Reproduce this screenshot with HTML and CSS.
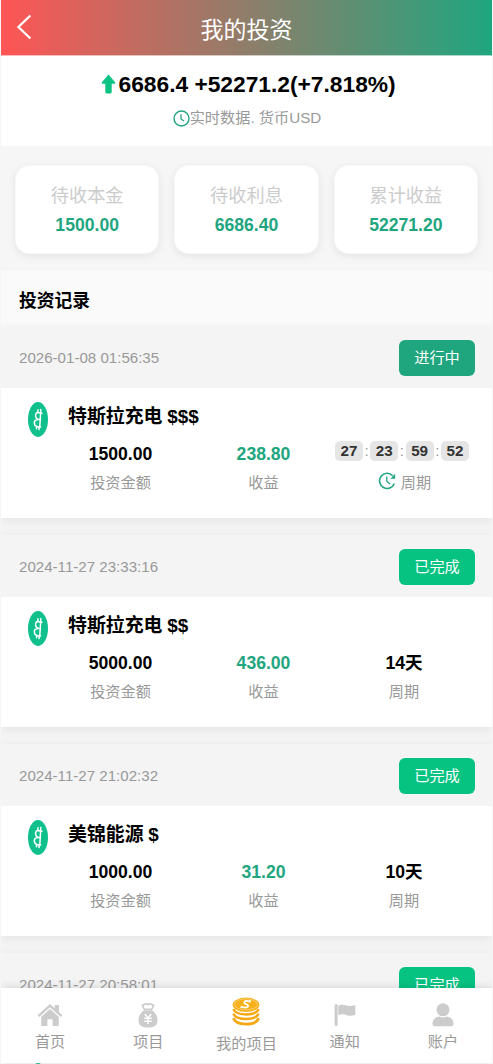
FILE: index.html
```html
<!DOCTYPE html>
<html lang="zh-CN">
<head>
<meta charset="utf-8">
<meta name="viewport" content="width=device-width, initial-scale=1">
<title>我的投资</title>
<link rel="stylesheet" href="styles.css">
</head>
<body>
<svg class="defs" width="0" height="0" aria-hidden="true">
  <symbol id="coin" viewBox="0 0 20 35">
    <ellipse cx="10" cy="17.5" rx="10" ry="17.5" fill="#0fc08d"/>
    <g fill="none" stroke="#fff" stroke-width="1.5" stroke-linecap="round" stroke-linejoin="round">
      <path d="M14 11.2 9.6 10.4Q7.4 11 7.6 14 7.8 17 10.6 17.4L12.4 17.6M10.6 17.4Q6.5 17.2 6.3 20.6 6.3 24 9.2 24.6L12.6 25M12.6 11 11.8 24.8M10 7.8 9.8 10.2M12.8 7.6 12.6 10.5M8.6 24.8 8.5 26.8M11.2 25 11 27.6"/>
    </g>
  </symbol>
</svg>
<div class="page">
  <header class="header">
    <svg class="back" width="16" height="26" viewBox="0 0 16 26"><path d="M14.4 1.5 2.4 13 14.4 24.5" fill="none" stroke="#fff" stroke-width="2.2"/></svg>
    <h1 class="title">我的投资</h1>
  </header>

  <section class="summary">
    <div class="total">
      <svg class="up" width="15" height="20" viewBox="0 0 15 20"><path d="M7.5.4 14.3 8.4Q14.6 9.7 13.4 9.8H10.7V18Q10.7 19.4 9.4 19.4H5.6Q4.3 19.4 4.3 18V9.8H1.6Q.4 9.7.7 8.4Z" fill="#0bc382"/></svg><span>6686.4 +52271.2(+7.818%)</span>
    </div>
    <div class="live">
      <svg width="17" height="17" viewBox="0 0 17 17" fill="none" stroke="#23a580"><circle cx="8.5" cy="8.5" r="7.5" stroke-width="1.4"/><path d="M8 4.3V9L11 11" stroke-width="1.3"/></svg><span>实时数据. 货币USD</span>
    </div>
  </section>

  <section class="stats">
    <div class="stat"><span class="stat-label">待收本金</span><b class="stat-value">1500.00</b></div>
    <div class="stat"><span class="stat-label">待收利息</span><b class="stat-value">6686.40</b></div>
    <div class="stat"><span class="stat-label">累计收益</span><b class="stat-value">52271.20</b></div>
  </section>

  <h2 class="section-title">投资记录</h2>

  <main class="records">
    <article class="record">
      <div class="record-head"><time>2026-01-08 01:56:35</time><span class="status running">进行中</span></div>
      <div class="record-body">
        <svg class="coin" width="20" height="35"><use href="#coin"/></svg>
        <h3 class="name">特斯拉充电 <span class="grade">$$$</span></h3>
        <div class="figures">
          <div class="figure"><b>1500.00</b><span>投资金额</span></div>
          <div class="figure profit"><b>238.80</b><span>收益</span></div>
          <div class="figure">
            <div class="countdown"><b>27</b><i>:</i><b>23</b><i>:</i><b>59</b><i>:</i><b>52</b></div>
            <span class="cycle"><svg width="18" height="18" viewBox="0 0 18 18" fill="none" stroke="#23a580" stroke-width="1.6"><path d="M14.7 3.7A7.6 7.6 0 1 0 16.3 11.5"/><path d="M8.8 4.5V9.2L12 12" stroke-width="1.3"/><path d="M17.2 1.8V6.8H12.4Z" fill="#23a580" stroke="none"/></svg>周期</span>
          </div>
        </div>
      </div>
    </article>

    <article class="record">
      <div class="record-head"><time>2024-11-27 23:33:16</time><span class="status">已完成</span></div>
      <div class="record-body">
        <svg class="coin" width="20" height="35"><use href="#coin"/></svg>
        <h3 class="name">特斯拉充电 <span class="grade">$$</span></h3>
        <div class="figures">
          <div class="figure"><b>5000.00</b><span>投资金额</span></div>
          <div class="figure profit"><b>436.00</b><span>收益</span></div>
          <div class="figure"><b>14天</b><span>周期</span></div>
        </div>
      </div>
    </article>

    <article class="record">
      <div class="record-head"><time>2024-11-27 21:02:32</time><span class="status">已完成</span></div>
      <div class="record-body">
        <svg class="coin" width="20" height="35"><use href="#coin"/></svg>
        <h3 class="name">美锦能源 <span class="grade">$</span></h3>
        <div class="figures">
          <div class="figure"><b>1000.00</b><span>投资金额</span></div>
          <div class="figure profit"><b>31.20</b><span>收益</span></div>
          <div class="figure"><b>10天</b><span>周期</span></div>
        </div>
      </div>
    </article>

    <article class="record">
      <div class="record-head"><time>2024-11-27 20:58:01</time><span class="status">已完成</span></div>
      <div class="record-body">
        <svg class="coin" width="20" height="35"><use href="#coin"/></svg>
      </div>
    </article>
  </main>

  <nav class="tabbar">
    <a class="tab">
      <svg width="26" height="24" viewBox="0 0 26 24" fill="#ccc"><path d="M13 1 17.8 5.3V2H22V9.2L25.4 12.2 23.8 13.9 13 4.2 2.2 13.9.6 12.2Z"/><path d="M13 6 21.8 13.8V22Q21.8 23 20.8 23H15.6V16.3H10.4V23H5.2Q4.2 23 4.2 22V13.8Z"/></svg>
      <span>首页</span>
    </a>
    <a class="tab">
      <svg width="20" height="25" viewBox="0 0 20 25"><path d="M6.2 6.2 4.2 2.5Q8-.3 10 1.6 12-.3 15.8 2.5L13.8 6.2Z" fill="none" stroke="#ccc" stroke-width="1.6" stroke-linejoin="round"/><path d="M5.8 7.3H14.2C17 9.6 19.5 13 19.5 17 19.5 22.5 16.5 24.5 10 24.5S.5 22.5.5 17C.5 13 3 9.6 5.8 7.3Z" fill="#ccc"/><path d="M6.8 11 10 15 13.2 11M10 15V21M6.2 15.3H13.8M6.2 18.3H13.8" stroke="#fff" stroke-width="1.4" fill="none"/></svg>
      <span>项目</span>
    </a>
    <a class="tab active">
      <svg width="28" height="29" viewBox="0 0 28 29"><g fill="none" stroke="#f5a812" stroke-width="2.5"><path d="M1.5 12Q3 17.2 14 17.4 25 17.2 26.5 12"/><path d="M1.5 16.6Q3 21.8 14 22 25 21.8 26.5 16.6"/><path d="M1.5 21.2Q3 26.9 14 27.1 25 26.9 26.5 21.2" stroke-width="2.8"/></g><ellipse cx="14" cy="7.8" rx="13.4" ry="7.3" fill="#f8b01b"/><ellipse cx="14" cy="7.4" rx="11.4" ry="5.6" fill="none" stroke="#fff" stroke-width=".5" opacity=".7"/><path d="M18.4 5.1Q14 2.9 12.4 5 11.6 6.4 14.3 7.2 17.5 8.5 15.5 10 13 11.3 9.3 9.6M18.6 3.2 17.3 5.2M10.3 9 8.8 11" fill="none" stroke="#fff" stroke-width="1.7"/></svg>
      <span>我的项目</span>
    </a>
    <a class="tab">
      <svg width="22" height="24" viewBox="0 0 22 24" fill="#ccc"><rect x=".6" y="1" width="3" height="22" rx="1.5"/><path d="M4.3 2.5Q8.5.8 12.5 2.5 16.8 3.6 21.3 2V11.8Q16.8 13.8 12.5 12 8.5 10.3 4.3 12.2Z"/></svg>
      <span>通知</span>
    </a>
    <a class="tab">
      <svg width="22" height="24" viewBox="0 0 22 24" fill="#ccc"><circle cx="11" cy="6.8" r="6.5"/><path d="M.5 20.5Q1 14.2 7.2 13.6 11 15.6 14.8 13.6 21 14.2 21.5 20.5 21.6 23.3 19 23.3H3Q.4 23.3.5 20.5Z"/></svg>
      <span>账户</span>
    </a>
  </nav>
</div>
</body>
</html>
```
FILE: styles.css
```css
* { box-sizing: border-box; }

body {
  margin: 0;
  background: #f4f4f4;
  color: #000;
  font-family: "Liberation Sans", "Noto Sans CJK SC", sans-serif;
}

svg { display: block; flex: none; }
h1, h2, h3 { margin: 0; }
.defs { position: absolute; }

.page {
  position: relative;
  height: 1064px;
  overflow: hidden;
  border: solid #f5f5f5;
  border-width: 0 1px;
}

.header {
  display: grid;
  grid-template-columns: 48px 1fr 48px;
  align-items: center;
  height: 56px;
  padding-top: 4px;
  border-bottom: 1px solid rgba(255, 255, 255, .6);
  background: linear-gradient(90deg, #ff5555, #1fa67f);
}
.back { margin: -5px 0 0 15px; }
.title {
  color: #fff;
  font-size: 23px;
  font-weight: 400;
  line-height: 34px;
  text-align: center;
}

.summary {
  height: 90px;
  padding-top: 13px;
  background: #fff;
}
.total, .live {
  display: flex;
  justify-content: center;
  align-items: center;
}
.total {
  gap: 3px;
  padding-left: 3px;
  font-size: 22.8px;
  font-weight: 700;
  line-height: 30px;
}
.total span {
  width: 277px;
  letter-spacing: -.02px;
  white-space: nowrap;
}
.live {
  margin-top: 8px;
  padding-left: 1px;
  color: #999;
  font-size: 15.2px;
  line-height: 22px;
}

.stats {
  display: grid;
  grid-template-columns: repeat(3, 1fr);
  gap: 15px;
  height: 125px;
  padding: 19px 14px 18px;
  background: #f6f6f6;
}
.stat {
  display: flex;
  flex-direction: column;
  align-items: center;
  height: 89px;
  padding-top: 16px;
  border: 1px solid #f8f8f8;
  border-radius: 14px;
  background: #fff;
  box-shadow: 0 2px 9px rgba(0, 0, 0, .08);
}
.stat-label { color: #ccc; font-size: 18.2px; line-height: 28px; }
.stat-value { color: #1fa67f; font-size: 17.6px; line-height: 30px; }

.section-title {
  height: 55px;
  padding-left: 18px;
  background: #fafafa;
  font-size: 17.8px;
  line-height: 60px;
}

.records { display: flex; flex-direction: column; gap: 17px; }
.record { box-shadow: 0 2px 10px rgba(0, 0, 0, .07); }
.record-head {
  display: flex;
  justify-content: space-between;
  align-items: center;
  height: 62px;
  padding: 1px 17px 0 18px;
  background: #f4f4f4;
  color: #999;
  font-size: 15.1px;
}
.status {
  width: 76px;
  height: 36px;
  border-radius: 6px;
  background: #07c382;
  color: #fff;
  font-size: 15.2px;
  line-height: 35px;
  text-align: center;
}
.running { background: #1fa67f; }

.record-body {
  display: grid;
  grid-template-columns: 40px 1fr;
  grid-template-rows: 38px 1fr;
  height: 130px;
  padding: 14px 16px 0 27px;
  background: #fff;
}
.name { padding-top: 1px; font-size: 18.9px; line-height: 28px; }
.grade { margin-left: -.5px; }
.figures {
  display: grid;
  grid-template-columns: 107px 179px 1fr;
  grid-column: 1 / -1;
  margin-left: 39px;
}
.figure {
  display: flex;
  flex-direction: column;
  align-items: center;
  color: #999;
  font-size: 15.2px;
  line-height: 28px;
}
.figure > b { color: #000; font-size: 17.6px; line-height: 29px; }
.figure.profit > b { color: #1fa67f; }
.figure:last-child { width: 138px; margin-left: -18px; }

.countdown {
  display: flex;
  align-items: flex-start;
  width: 134px;
  height: 29px;
  margin-left: -4px;
  padding-top: 1px;
}
.countdown b {
  width: 28px;
  height: 20px;
  border-radius: 5px;
  background: #e5e5e5;
  color: #333;
  font-size: 15.2px;
  line-height: 20px;
  text-align: center;
}
.countdown i {
  width: 7.3px;
  font-style: normal;
  line-height: 19px;
  text-align: center;
}
.cycle { display: flex; gap: 5px; padding-left: 1px; }
.cycle svg { margin-top: 3px; }

.tabbar {
  position: absolute;
  right: 0;
  bottom: 1px;
  left: 0;
  display: grid;
  grid-template-columns: repeat(5, 1fr);
  height: 75px;
  background: #fff;
  box-shadow: 0 0 9px rgba(0, 0, 0, .15);
}
.tab {
  display: flex;
  flex-direction: column;
  align-items: center;
  padding-top: 15px;
  color: #999;
  font-size: 15.2px;
  line-height: 24px;
}
.tab svg { margin-bottom: auto; }
.tab span { margin-bottom: 9px; }
.tab.active { padding-top: 9px; }
.tab.active span { margin-bottom: 7px; }
```
